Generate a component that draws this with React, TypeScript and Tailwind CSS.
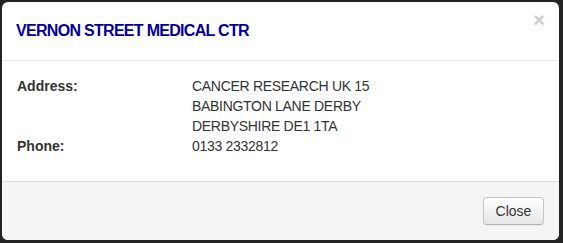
import React from "react";

export default function App() {
  const font = { fontFamily: '"Liberation Sans", Arial, sans-serif' };
  return (
    <div className="w-[563px] h-[243px] bg-[#232323] pt-[2px] pl-[2px] overflow-hidden" style={font}>
      <div className="w-[557px] h-[238px] bg-white rounded-[6px] flex flex-col overflow-hidden">
        <div className="h-[59px] border-b border-[#e5e5e5] flex justify-between items-start shrink-0">
          <h3 className="pl-[14px] pt-[19px] text-[16px] leading-[20px] font-bold tracking-[-0.7px] text-[#000099]">
            VERNON STREET MEDICAL CTR
          </h3>
          <span className="pr-[14px] pt-[8px] text-[20px] leading-[20px] font-bold text-black opacity-20">
            ×
          </span>
        </div>
        <div className="flex-1 pt-[15px] text-[14px] leading-[20px] text-[#333] tracking-[-0.3px]">
          <div className="flex">
            <div className="w-[190px] pl-[15px] font-bold shrink-0 tracking-normal">Address:</div>
            <div>
              <div>CANCER RESEARCH UK 15</div>
              <div>BABINGTON LANE DERBY</div>
              <div>DERBYSHIRE DE1 1TA</div>
            </div>
          </div>
          <div className="flex">
            <div className="w-[190px] pl-[15px] font-bold shrink-0 tracking-normal">Phone:</div>
            <div>0133 2332812</div>
          </div>
        </div>
        <div className="h-[59px] border-t border-[#ddd] bg-[#f5f5f5] flex justify-end items-start pt-[15px] pr-[15px] shrink-0">
          <button className="w-[61px] h-[28px] rounded-[4px] border border-[#c5c5c5] border-b-[#b3b3b3] bg-gradient-to-b from-white to-[#e6e6e6] text-[14px] leading-[20px] text-[#333] shadow-[inset_0_1px_0_rgba(255,255,255,0.2),0_1px_2px_rgba(0,0,0,0.05)]">
            Close
          </button>
        </div>
      </div>
    </div>
  );
}
